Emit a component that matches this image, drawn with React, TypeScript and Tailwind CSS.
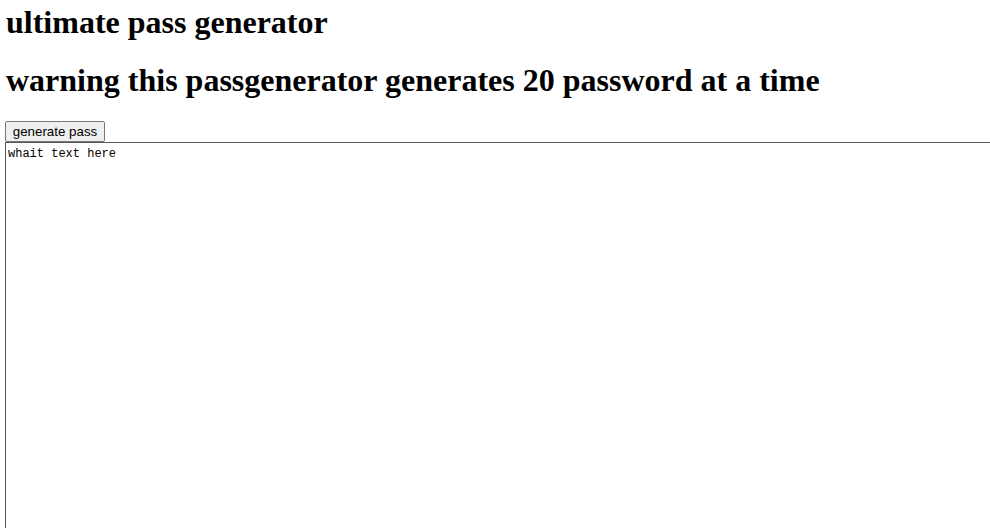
export default function App() {
  return (
    <div className="w-[990px] h-[528px] overflow-hidden bg-white text-black">
      <div className="pl-[5px] pt-[4px]">
        <h1 className="font-['Liberation_Serif',serif] text-[32px] font-bold leading-[37px] pl-[1px]">
          ultimate pass generator
        </h1>
        <h1 className="font-['Liberation_Serif',serif] text-[32px] font-bold leading-[37px] pl-[1px] mt-[21px]">
          warning this passgenerator generates 20 password at a time
        </h1>
        <button className="mt-[22px] block h-[21px] w-[100px] border border-[#767676] rounded-[2px] bg-[#efefef] font-['Liberation_Sans',sans-serif] text-[13.33px] leading-[15px] text-black">
          generate pass
        </button>
        <textarea
          className="block w-[1100px] h-[500px] border border-[#555555] px-[2px] pt-[4px] font-['Liberation_Mono',monospace] text-[12px] leading-[15px] text-black resize-none outline-none"
          defaultValue="whait text here"
        />
      </div>
    </div>
  );
}
